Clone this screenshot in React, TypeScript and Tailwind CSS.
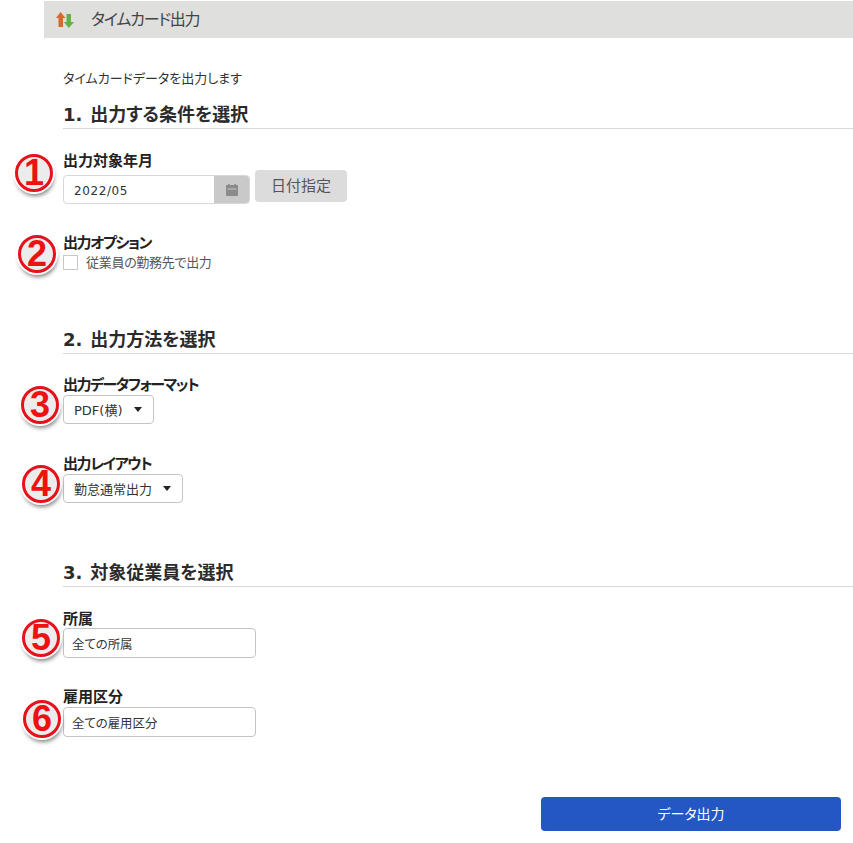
const font = {
  fontFamily: '"DejaVu Sans", "Noto Sans CJK JP", sans-serif',
  fontFeatureSettings: '"palt"',
};

function Badge({ n, className }: { n: string; className: string }) {
  return (
    <div className={`absolute flex h-[38px] w-[38px] items-center justify-center rounded-full border-[3px] border-[#e8101a] bg-[#ececec] font-['Liberation_Sans'] text-[36px] leading-none font-bold text-[#ee1111] shadow-[1px_4px_4px_rgba(0,0,0,0.5)] ring-2 ring-white ${className}`}>
      {n}
    </div>
  );
}

function Heading({ children, className = "" }: { children: string; className?: string }) {
  return (
    <h2 className={`h-[28px] border-b border-[#d9d9d9] text-[18px] leading-[27px] font-bold text-[#2b2b2b] [word-spacing:1.5px] ${className}`}>
      {children}
    </h2>
  );
}

function Label({ children, className = "" }: { children: string; className?: string }) {
  return <div className={`h-[17px] text-[15px] leading-[17px] font-bold text-[#222] ${className}`}>{children}</div>;
}

function Select({ text, width }: { text: string; width: string }) {
  return (
    <div className={`mt-px flex h-[29px] items-center justify-between rounded-[4px] border border-[#c4c4c4] bg-white pr-[11px] pl-[10px] text-[13px] text-[#333] ${width}`}>
      <span className="pt-[2px]">{text}</span>
      <span className="h-0 w-0 border-x-[4px] border-t-[5px] border-x-transparent border-t-[#222]" />
    </div>
  );
}

function TextBox({ text, className = "" }: { text: string; className?: string }) {
  return (
    <div className={`flex h-[30px] w-[193px] items-center rounded-[4px] border border-[#c4c4c4] bg-white pt-[4px] pl-[8px] text-[12.4px] text-[#333] ${className}`}>
      {text}
    </div>
  );
}

export default function App() {
  return (
    <div style={font} className="relative h-[843px] w-[853px] overflow-hidden bg-white">
      <header className="mt-px ml-[44px] flex h-[37px] items-center bg-[#dfdfdd] pl-[11px]">
        <svg width="20" height="20" viewBox="0 0 20 20">
          <path d="M5.5 2 L10.5 8 H8 V17 H3.5 V8 H1 Z" fill="#d9682c" />
          <path d="M13.8 18 L8.8 12 H11.5 V4 H16 V12 H19 Z" fill="#62b04a" />
        </svg>
        <span className="ml-[16px] text-[16px] leading-none tracking-[-1.2px] text-[#444]">タイムカード出力</span>
      </header>

      <main className="pl-[63px]">
        <p className="mt-[32px] h-[17px] text-[13px] leading-[18px] text-[#333]">タイムカードデータを出力します</p>
        <Heading className="mt-[14px]">1. 出力する条件を選択</Heading>

        <section className="mt-[24px]">
          <Label>出力対象年月</Label>
          <div className="flex items-start">
            <div className="mt-[5px] flex h-[29px] w-[187px] overflow-hidden rounded-[4px] border border-[#d8d8d8] bg-white">
              <div className="flex-1 pt-px pl-[10px] text-[12px] leading-[28px] tracking-[0.6px] text-[#333]">2022/05</div>
              <div className="flex w-[35px] items-center justify-center bg-[#c9c9c9]">
                <svg width="14" height="14" viewBox="0 0 14 14">
                  <rect x="1" y="2" width="12" height="11" rx="1" fill="#8a8a8a" />
                  <rect x="3" y="1" width="1.5" height="2" fill="#8a8a8a" />
                  <rect x="9.5" y="1" width="1.5" height="2" fill="#8a8a8a" />
                  <rect x="2.5" y="5.5" width="9" height="1" fill="#c9c9c9" />
                </svg>
              </div>
            </div>
            <button className="ml-[5px] h-[32px] w-[92px] rounded-[4px] bg-[#dcdcdc] text-[15px] text-[#555]">日付指定</button>
          </div>
        </section>

        <section className="mt-[31px]">
          <Label className="tracking-[-1.4px]">出力オプション</Label>
          <div className="mt-[2px] flex h-[17px] items-center">
            <span className="h-[15px] w-[15px] border border-[#c8c8c8] bg-white" />
            <span className="ml-[8px] text-[13px] tracking-[-0.3px] text-[#555]">従業員の勤務先で出力</span>
          </div>
        </section>

        <Heading className="mt-[55px]">2. 出力方法を選択</Heading>

        <section className="mt-[23px]">
          <Label className="tracking-[-1.5px]">出力データフォーマット</Label>
          <Select text="PDF(横)" width="w-[91px]" />
        </section>

        <section className="mt-[32px]">
          <Label className="tracking-[-1.4px]">出力レイアウト</Label>
          <Select text="勤怠通常出力" width="w-[120px]" />
        </section>

        <Heading className="mt-[56px]">3. 対象従業員を選択</Heading>

        <section className="mt-[24px]">
          <Label>所属</Label>
          <TextBox text="全ての所属" />
        </section>

        <section className="mt-[31px]">
          <Label>雇用区分</Label>
          <TextBox text="全ての雇用区分" className="mt-px" />
        </section>
      </main>

      <div className="mt-[60px] flex justify-end pr-[12px]">
        <button className="h-[34px] w-[300px] rounded-[4px] bg-[#2557c4] text-[14px] text-white">データ出力</button>
      </div>

      <Badge n="1" className="top-[154px] left-[15px]" />
      <Badge n="2" className="top-[235px] left-[18px]" />
      <Badge n="3" className="top-[386px] left-[21px]" />
      <Badge n="4" className="top-[465px] left-[22px]" />
      <Badge n="5" className="top-[619px] left-[22px]" />
      <Badge n="6" className="top-[700px] left-[23px]" />
    </div>
  );
}
